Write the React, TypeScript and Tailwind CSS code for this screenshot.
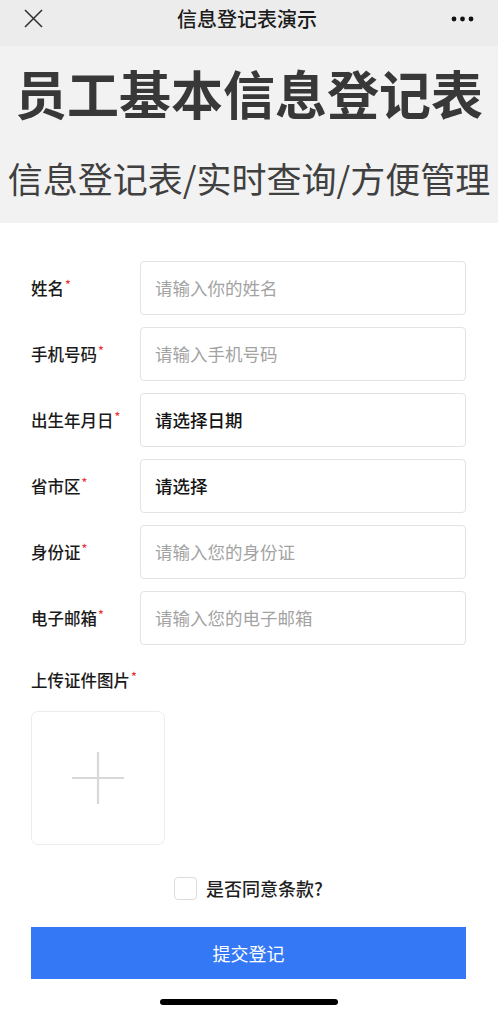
import React from "react";

const font = { fontFamily: '"Noto Sans CJK SC", "Noto Sans", sans-serif' };

function Field({ label, placeholder, filled }: { label: string; placeholder: string; filled?: boolean }) {
  return (
    <div className="flex items-center h-[54px]">
      <div className="w-[109px] text-[16.5px] leading-[22px] font-medium text-[#1a1a1a] flex items-start">
        <span>{label}</span>
        <span className="text-[#e33] text-[12px] leading-[14px] ml-[1px]">*</span>
      </div>
      <div className="flex-1 h-[54px] border border-[#e3e3e6] rounded-[4px] bg-white flex items-center pl-[14px]">
        <span className={filled ? "text-[17.5px] font-medium text-[#141414]" : "text-[17.5px] text-[#a3a3a3]"}>{placeholder}</span>
      </div>
    </div>
  );
}

export default function App() {
  return (
    <div className="w-[498px] h-[1015px] bg-white overflow-hidden" style={font}>
      {/* top bar */}
      <div className="h-[46px] bg-[#ececec]">
        <div className="h-[37px] flex items-center justify-between px-[24px]">
          <svg width="19" height="19" viewBox="0 0 19 19">
            <path d="M1 1 L18 18 M18 1 L1 18" stroke="#333" strokeWidth="1.6" />
          </svg>
          <div className="text-[20px] text-[#1c1c1c] leading-[26px] font-medium">信息登记表演示</div>
          <svg width="23" height="6" viewBox="0 0 23 6">
            <circle cx="3" cy="3" r="2.4" fill="#111" />
            <circle cx="11.5" cy="3" r="2.4" fill="#111" />
            <circle cx="20" cy="3" r="2.4" fill="#111" />
          </svg>
        </div>
      </div>

      {/* banner */}
      <div className="h-[177px] bg-[#f2f2f2] flex flex-col items-center">
        <div className="mt-[17px] text-[52px] leading-[60px] font-bold text-[#383838] whitespace-nowrap">员工基本信息登记表</div>
        <div className="mt-[34px] text-[35px] leading-[42px] text-[#404040] whitespace-nowrap">信息登记表/实时查询/方便管理</div>
      </div>

      {/* form */}
      <div className="pl-[31px] pr-[32px] pt-[38px]">
        <div className="flex flex-col gap-[12px]">
          <Field label="姓名" placeholder="请输入你的姓名" />
          <Field label="手机号码" placeholder="请输入手机号码" />
          <Field label="出生年月日" placeholder="请选择日期" filled />
          <Field label="省市区" placeholder="请选择" filled />
          <Field label="身份证" placeholder="请输入您的身份证" />
          <Field label="电子邮箱" placeholder="请输入您的电子邮箱" />
        </div>

        <div className="mt-[24px] flex items-start text-[16.5px] leading-[22px] font-medium text-[#1a1a1a]">
          <span>上传证件图片</span>
          <span className="text-[#e33] text-[12px] leading-[14px] ml-[1px]">*</span>
        </div>

        <div className="mt-[20px] w-[134px] h-[134px] border border-[#ececec] rounded-[7px] flex items-center justify-center">
          <svg width="54" height="54" viewBox="0 0 54 54">
            <path d="M1 27 H53 M27 1 V53" stroke="#d8d8d8" strokeWidth="2.2" />
          </svg>
        </div>

        <div className="mt-[32px] flex items-center justify-center gap-[9px]">
          <div className="w-[23px] h-[23px] border border-[#dcdcdc] rounded-[4px] bg-white"></div>
          <span className="text-[18px] leading-[23px] font-medium text-[#1f1f1f]">是否同意条款?</span>
        </div>

        <div className="mt-[27px] h-[52px] bg-[#3478f6] flex items-center justify-center">
          <span className="text-[18px] text-white">提交登记</span>
        </div>
      </div>

      <div className="mt-[20px] flex justify-center">
        <div className="w-[178px] h-[6px] rounded-full bg-black"></div>
      </div>
    </div>
  );
}
